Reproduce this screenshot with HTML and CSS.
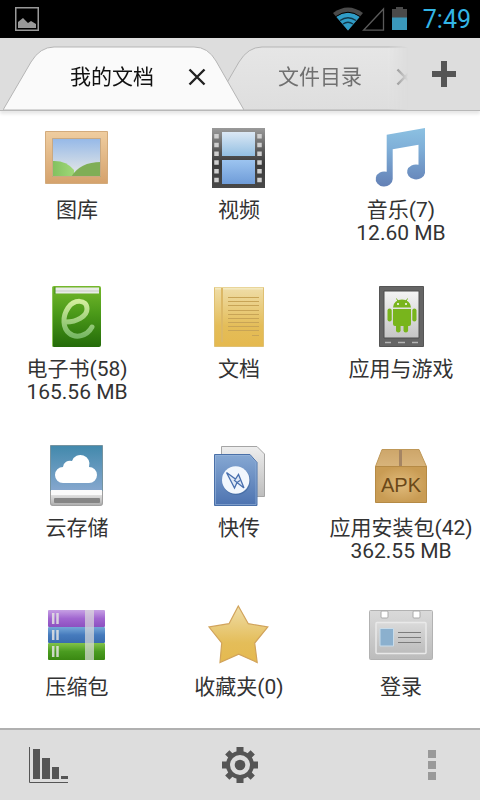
FILE: index.html
```html
<!DOCTYPE html>
<html lang="zh-CN">
<head>
<meta charset="utf-8">
<meta name="viewport" content="width=device-width, initial-scale=1">
<title>我的文档</title>
<link rel="stylesheet" href="styles.css">
</head>
<body>
<div class="status">
  <svg class="status-picture" width="24" height="24" viewBox="0 0 24 24" aria-hidden="true"><path d="M.75.75h22.5v22.5H.75z" fill="none" stroke="#999" stroke-width="1.5"/><path d="M3 21v-6l5-4 5 5 3-2 5 3v4z" fill="#999"/></svg>
  <svg width="74" height="24" viewBox="0 0 74 24" aria-hidden="true">
    <path d="M15 23.500L0 6Q15-5 30 6z" fill="#4a4a4a"/>
    <path d="M15 23.500L3.200 9.800Q15 1.500 26.800 9.800z" fill="#2f9cc6"/>
    <path d="M3 9.500Q15 1 27 9.500" fill="none" stroke="#000" stroke-width="1"/>
    <path d="M7 13.500Q15 8 23 13.500M10 17Q15 13.500 20 17" fill="none" stroke="#12384a" stroke-width="1.500"/>
    <path d="M30.500 23.200L50.500 2v21.200z" fill="none" stroke="#5a5a5a" stroke-width="1.300"/>
    <path d="M63 0h7v2h4v9H59V2h4z" fill="#4a4a4a"/><path d="M59 10.500h15V23H59z" fill="#3a98bb"/>
  </svg>
  <time class="clock">7:49</time>
</div>

<header class="tabbar">
  <nav class="tabs" aria-label="标签页">
    <div class="tab tab-active">
      <svg class="tab-shape" width="241" height="64" viewBox="0 0 241 64" aria-hidden="true"><path d="M0 64L28 16Q37 1 51 1H191Q205 1 213 15L241 64z" fill="#fafafa" stroke="#b5b5b5"/></svg>
      <div class="tab-content"><button class="tab-name">我的文档</button><button class="icon-button" aria-label="关闭我的文档"><svg width="18" height="18" viewBox="0 0 18 18"><path d="M1.500 1.500l15 15m0-15l-15 15" stroke="#222" stroke-width="2.400"/></svg></button></div>
    </div>
    <div class="tab">
      <svg class="tab-shape" width="241" height="64" viewBox="0 0 241 64" aria-hidden="true"><defs><linearGradient id="tabFill" x2="0" y2="1"><stop stop-color="#e6e6e6"/><stop offset="1" stop-color="#dedede"/></linearGradient></defs><path d="M0 64L28 16Q37 1 51 1H191Q205 1 213 15L241 64z" fill="url(#tabFill)" stroke="#b5b5b5"/></svg>
      <div class="tab-content"><button class="tab-name">文件目录</button><button class="icon-button" aria-label="关闭文件目录"><svg width="18" height="18" viewBox="0 0 18 18"><path d="M1.500 1.500l15 15m0-15l-15 15" stroke="#666" stroke-width="2.400"/></svg></button></div>
    </div>
  </nav>
  <button class="add-tab" aria-label="新建标签页"><svg width="24" height="26" viewBox="0 0 24 26"><path d="M9 0h6v10h9v6h-9v10H9V16H0v-6h9z" fill="#555"/></svg></button>
</header>

<main class="grid">
  <a class="item" href="#gallery">
    <svg class="icon" viewBox="0 0 64 64" aria-hidden="true"><defs><linearGradient id="frame" x2="0" y2="1"><stop stop-color="#efcda0"/><stop offset="1" stop-color="#d5a26c"/></linearGradient><linearGradient id="sky" x2="0" y2="1"><stop stop-color="#94b8e8"/><stop offset=".8" stop-color="#d9e0e6"/></linearGradient><linearGradient id="hillA" x2="1"><stop stop-color="#82c05e"/><stop offset="1" stop-color="#a0d878"/></linearGradient></defs><path d="M.5 5.500h62v52H.5z" fill="url(#frame)" stroke="#d3ab7c"/><path d="M7 12h49v39H7z" fill="url(#sky)"/><path d="M7 35q14-1 22 9v7H7z" fill="url(#hillA)"/><path d="M26 51Q35 36 56 36v15z" fill="#7fae56"/><path d="M7.500 12.500h48v38h-48z" fill="none" stroke="#c9a982"/></svg>
    <span>图库</span></a>
  <a class="item" href="#video">
    <svg class="icon" viewBox="0 0 64 64" aria-hidden="true"><defs><linearGradient id="film" x2="0" y2="1"><stop stop-color="#9a9a9a"/><stop offset=".4" stop-color="#555"/><stop offset=".6" stop-color="#3c3c3c"/><stop offset="1" stop-color="#484848"/></linearGradient><linearGradient id="shotA" x2="0" y2="1"><stop stop-color="#dbe8f5"/><stop offset="1" stop-color="#93bfe2"/></linearGradient><linearGradient id="shotB" x2="0" y2="1"><stop stop-color="#9cc4f0"/><stop offset="1" stop-color="#6f9cd8"/></linearGradient></defs><path d="M5 2h53v60H5z" fill="url(#film)"/><path d="M15 6h33v24H15z" fill="url(#shotA)"/><path d="M15 34h33v24H15z" fill="url(#shotB)"/><path d="M9.500 8v50M52.500 8v50" stroke="#cfcfcf" stroke-width="4.500" stroke-dasharray="4.500 4.250"/></svg>
    <span>视频</span></a>
  <a class="item" href="#music">
    <svg class="icon" viewBox="0 0 64 64" aria-hidden="true"><defs><linearGradient id="note" gradientUnits="userSpaceOnUse" x1="0" y1="2" x2="0" y2="60"><stop stop-color="#8cc1e2"/><stop offset=".35" stop-color="#7fafd8"/><stop offset="1" stop-color="#6481b6"/></linearGradient></defs><path d="M17.700 8.700L56 2v45a9 7.500 0 1 1-6.500-8.300v-20L23.700 23.300V53a8.500 7.500 0 1 1-6-7.200z" fill="url(#note)"/></svg>
    <span>音乐(7)</span><span>12.60 MB</span></a>
  <a class="item" href="#ebooks">
    <svg class="icon" viewBox="0 0 64 64" aria-hidden="true"><defs><linearGradient id="book" x2="0" y2="1"><stop stop-color="#75b82c"/><stop offset=".45" stop-color="#4b9a19"/><stop offset="1" stop-color="#246b0a"/></linearGradient><linearGradient id="swirl" x2="0" y2="1"><stop stop-color="#d2ed9d"/><stop offset="1" stop-color="#78b865"/></linearGradient></defs><rect x="7" y="1" width="49" height="61" rx="2" fill="url(#book)"/><path d="M10 2.500h44v6H10z" fill="#e9ece7"/><path d="M10 6h44" stroke="#c9cdc6"/><path d="M10 2v7" stroke="#3f8a1c"/><path d="M7.500 2v59" stroke="#8ac456"/><path d="M21 37C32 37 42 31 42 24C42 14 29 14 23 23C17 32 18 43 24 48C31 54 42 51 47 42" fill="none" stroke="url(#swirl)" stroke-width="5" stroke-linecap="round"/></svg>
    <span>电子书(58)</span><span>165.56 MB</span></a>
  <a class="item" href="#documents">
    <svg class="icon" viewBox="0 0 64 64" aria-hidden="true"><defs><linearGradient id="paper" x2="0" y2="1"><stop stop-color="#efdda8"/><stop offset=".65" stop-color="#e4bd59"/><stop offset="1" stop-color="#e5b94f"/></linearGradient></defs><path d="M7.500 2.500h49v59h-49z" fill="url(#paper)" stroke="#dfc072"/><path d="M8 3.500h48" stroke="#f3e9c0" stroke-width="2"/><path d="M15 3v54" stroke="#dcb866" stroke-width="2"/><path d="M21 12.500h31M21 16.500h31M21 20.500h31M21 25.500h31M21 29.500h31M21 33.500h31M21 37.500h31M21 41.500h31M21 45.500h31M45 50.500h7" stroke="#c8a456"/></svg>
    <span>文档</span></a>
  <a class="item" href="#apps">
    <svg class="icon" viewBox="0 0 64 64" aria-hidden="true"><defs><linearGradient id="screen" x2="0" y2="1"><stop stop-color="#f4f4f4"/><stop offset="1" stop-color="#c5c5c5"/></linearGradient></defs><path d="M10.500 1.500h44v60h-44z" fill="#656565" stroke="#555"/><path d="M15 6h35v47H15z" fill="url(#screen)" stroke="#4e4e4e"/><path d="M16 57.500h6M29 57.500h7M43 57.500h6" stroke="#b5b5b5" stroke-width="1.500"/><g fill="#78b51c"><path d="M24 22.500a9 8 0 0 1 18 0zM24 24h18v15a2 2 0 0 1-2 2H26a2 2 0 0 1-2-2z"/><rect x="18.500" y="23.500" width="4.200" height="13" rx="2.100"/><rect x="43.300" y="23.500" width="4.200" height="13" rx="2.100"/><rect x="27" y="36" width="4.600" height="11.500" rx="2.300"/><rect x="34.500" y="36" width="4.600" height="11.500" rx="2.300"/></g><path d="M29 16.500L27.500 13.500M37 16.500l1.500-3" stroke="#78b51c"/><circle cx="29" cy="19" r="1" fill="#fff"/><circle cx="37" cy="19" r="1" fill="#fff"/></svg>
    <span>应用与游戏</span></a>
  <a class="item" href="#cloud">
    <svg class="icon" viewBox="0 0 64 64" aria-hidden="true"><defs><linearGradient id="disk" x2="0" y2="1"><stop stop-color="#4289ac"/><stop offset="1" stop-color="#88a8cf"/></linearGradient><linearGradient id="base" x2="0" y2="1"><stop stop-color="#fff"/><stop offset=".35" stop-color="#ddd"/><stop offset="1" stop-color="#aaa"/></linearGradient></defs><path d="M5.500 1.500h52V48h-52z" fill="url(#disk)" stroke="#7593a0"/><path d="M6 46h51l1 7v6q0 3-3 3H8q-3 0-3-3v-6z" fill="url(#base)"/><path d="M6 46h51v5H6z" fill="#fafafa"/><path d="M5.500 47v12q0 2.500 3 2.500h46q3 0 3-2.500V47" fill="none" stroke="#a0a0a0"/><rect x="9" y="54" width="46" height="5" rx="1" fill="#858585"/><path d="M18 39a8 8 0 0 1 0-16 7 7 0 0 1 9-6 9 9 0 0 1 17 6 8 8 0 0 1 0 16z" fill="#fff"/></svg>
    <span>云存储</span></a>
  <a class="item" href="#transfer">
    <svg class="icon" viewBox="0 0 64 64" aria-hidden="true"><defs><linearGradient id="sheet" x2="0" y2="1"><stop stop-color="#86a8d3"/><stop offset="1" stop-color="#4d73b0"/></linearGradient><linearGradient id="backSheet" x2="0" y2="1"><stop stop-color="#eee"/><stop offset="1" stop-color="#bdbdbd"/></linearGradient></defs><path d="M14.500 2.500H50l7.500 7.500v42.500h-43z" fill="url(#backSheet)" stroke="#a5a5a5"/><path d="M7.500 10.500H43l7 8v43H7.500z" fill="url(#sheet)" stroke="#4a70a8"/><path d="M8.500 60.500v-49H43l6 7v42z" fill="none" stroke="#9bb7dc" stroke-opacity=".6"/><circle cx="29.300" cy="37" r="14" fill="#365f98" opacity=".5"/><circle cx="28.700" cy="36" r="13.700" fill="#f2f7fd"/><path d="M19.500 28.500l8 15.500 2-5.500 7 5-5-13-2.500 4.500z" fill="#dfe9f6"/><path d="M19.500 28.500l9 6.500 3-4.500 5.500 13.500M19.500 28.500l8 15.500 2.500-5.500 7 5.500M27 36l3 2.500 3-2" fill="none" stroke="#486fae" stroke-width="1.300"/></svg>
    <span>快传</span></a>
  <a class="item" href="#packages">
    <svg class="icon" viewBox="0 0 64 64" aria-hidden="true"><defs><radialGradient id="box"><stop stop-color="#e0bb7c"/><stop offset="1" stop-color="#c99c54"/></radialGradient><linearGradient id="lid" x2="0" y2="1"><stop stop-color="#cda66a"/><stop offset="1" stop-color="#d8b47b"/></linearGradient></defs><path d="M13 5.500h37l7.500 17H6.500z" fill="url(#lid)" stroke="#bf9858"/><path d="M6.500 22.500h51v36h-51z" fill="url(#box)" stroke="#b58a45"/><path d="M30 6h3v16h-3z" fill="#a58563"/><text x="32" y="48" class="apk">APK</text></svg>
    <span>应用安装包(42)</span><span>362.55 MB</span></a>
  <a class="item" href="#archives">
    <svg class="icon" viewBox="0 0 64 64" aria-hidden="true"><defs><linearGradient id="purple" x2="0" y2="1"><stop stop-color="#c6a0e4"/><stop offset=".5" stop-color="#a166d0"/><stop offset="1" stop-color="#8d50c0"/></linearGradient><linearGradient id="blue" x2="0" y2="1"><stop stop-color="#76a8d8"/><stop offset=".5" stop-color="#467bbd"/><stop offset="1" stop-color="#3a6cae"/></linearGradient><linearGradient id="green" x2="0" y2="1"><stop stop-color="#82c24a"/><stop offset=".5" stop-color="#4a9c20"/><stop offset="1" stop-color="#3a8812"/></linearGradient></defs><rect x="3" y="7" width="57" height="17" rx="1" fill="url(#purple)"/><rect x="3" y="24" width="57" height="16" rx="1" fill="url(#blue)"/><rect x="3" y="40" width="57" height="17" rx="1" fill="url(#green)"/><path d="M40 7h9v50h-9z" fill="#dcdcdc" opacity=".7"/><path d="M8.200 10v11M12.500 10v11M8.200 27v10M12.500 27v10M8.200 43v11M12.500 43v11" stroke="#e4e4e4" stroke-width="2.500" opacity=".85"/></svg>
    <span>压缩包</span></a>
  <a class="item" href="#favourites">
    <svg class="icon" viewBox="0 0 64 64" aria-hidden="true"><path d="M31.300 3l10 17.700 19.500 3.300-13.100 16 2.500 19.500-18.500-8.300L13 59.500 14.700 40 2 24l20-3.300z" fill="url(#paper)" stroke="#d1a35b" stroke-width="1.200"/></svg>
    <span>收藏夹(0)</span></a>
  <a class="item" href="#login">
    <svg class="icon" viewBox="0 0 64 64" aria-hidden="true"><defs><linearGradient id="card" x2="0" y2="1"><stop stop-color="#dadada"/><stop offset="1" stop-color="#bcbcbc"/></linearGradient></defs><rect x=".5" y="7.500" width="63" height="49" rx="1" fill="url(#card)" stroke="#b2b2b2"/><rect x="12" y="8" width="7" height="7" rx="1" fill="#fff" stroke="#aaa"/><rect x="44" y="8" width="7" height="7" rx="1" fill="#fff" stroke="#aaa"/><rect x="7" y="19.500" width="50" height="31" rx="1" fill="url(#card)" stroke="#e9e9e9" stroke-width="1.500"/><path d="M11 25.500h13.500V43H11z" fill="#8bb0ce" stroke="#c8dcea"/><path d="M29 29.500h23M29 34.500h23M29 39.500h23" stroke="#7c7c7c"/></svg>
    <span>登录</span></a>
</main>

<footer class="toolbar">
  <button class="tool" aria-label="存储统计"><svg width="40" height="36" viewBox="0 0 40 36"><path d="M1.500 0v35.500H40" fill="none" stroke="#555"/><path d="M5 2h7v30H5zM14 11h8v21h-8zM24 20h7v12h-7zM33 29h7v3h-7z" fill="#555"/></svg></button>
  <button class="tool" aria-label="设置"><svg width="36" height="36" viewBox="-18 -18 36 36"><g fill="#555"><circle r="14"/><path d="M-3.500-18h7v36h-7zM-18-3.500h36v7h-36z"/><path d="M-3-18h6v36h-6zM-18-3h36v6h-36z" transform="rotate(45)"/></g><circle r="10" fill="#ddd"/><circle r="5.300" fill="#555"/></svg></button>
  <button class="tool" aria-label="更多选项"><svg width="8" height="30" viewBox="0 0 8 30"><path d="M0 0h8v8H0zM0 11h8v8H0zM0 22h8v8H0z" fill="#999"/></svg></button>
</footer>
</body>
</html>
```

FILE: styles.css
```css
* { box-sizing: border-box; }

body {
  margin: 0;
  min-height: 100vh;
  display: flex;
  flex-direction: column;
  background: #fff;
  color: #333;
  font-family: Roboto, "Noto Sans CJK SC", sans-serif;
  font-size: 21px;
  line-height: 23px;
}

button {
  padding: 0;
  border: 0;
  background: none;
  color: inherit;
  font: inherit;
}

svg { display: block; }

.status {
  display: flex;
  align-items: center;
  height: 38px;
  padding: 0 9px 0 15px;
  background: #000;
}

.status-picture { margin-right: auto; }

.clock {
  margin-left: 16px;
  color: #33b5e5;
  font-size: 25px;
}

.tabbar {
  display: flex;
  height: 73px;
  border-bottom: 1px solid #b8b8b8;
  background: #ddd;
  box-shadow: 0 3px 3px #e8e8e8;
}

.tabs {
  flex: 1;
  min-width: 0;
  display: flex;
  align-items: flex-end;
  overflow: hidden;
  padding-left: 3px;
  mask-image: linear-gradient(to left, transparent, #000 20px);
}

.tab {
  flex: none;
  display: grid;
  margin-right: -33px;
  color: #707070;
}

.tab-active {
  z-index: 1;
  color: #111;
}

.tab-shape,
.tab-content { grid-area: 1 / 1; }

.tab-content {
  display: flex;
  align-items: center;
  justify-content: space-between;
  padding: 0 38px 2px 67px;
}

.add-tab {
  flex: none;
  display: grid;
  place-items: center;
  width: 72px;
}

.grid {
  flex: 1;
  display: grid;
  grid-template-columns: repeat(3, 1fr);
  grid-template-rows: repeat(3, 159px) auto;
  column-gap: 12px;
  padding: 15px 4px 0 2px;
}

.item {
  display: flex;
  flex-direction: column;
  align-items: center;
  color: inherit;
  text-decoration: none;
  white-space: nowrap;
}

.icon {
  width: 64px;
  height: 64px;
  margin-bottom: 9px;
}

.apk {
  fill: #6b4818;
  font-family: "Liberation Sans", sans-serif;
  font-size: 20px;
  text-anchor: middle;
}

.toolbar {
  display: flex;
  justify-content: space-between;
  height: 72px;
  padding: 0 24px;
  border-top: 2px solid #b0b0b0;
  background: #ddd;
}

.tool {
  display: grid;
  place-items: center;
  width: 48px;
}
```
